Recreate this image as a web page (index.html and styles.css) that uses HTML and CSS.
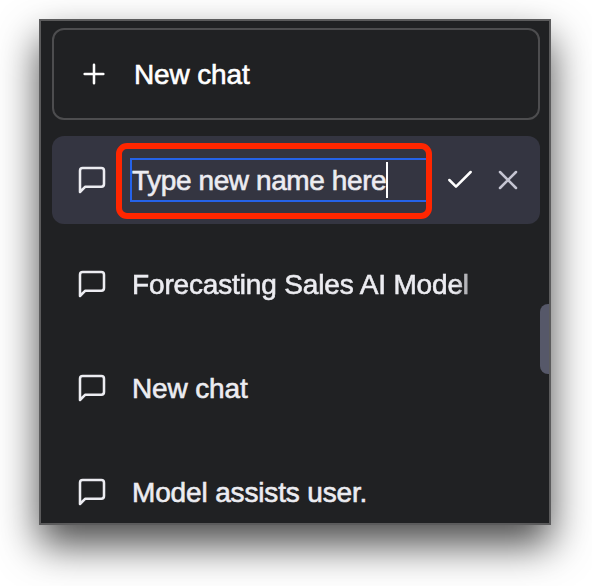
FILE: index.html
```
<!DOCTYPE html>
<html lang="en">
<head>
    <meta charset="UTF-8">
    <meta name="viewport" content="width=device-width, initial-scale=1.0">
    <title>Chat history</title>
    <link rel="stylesheet" href="styles.css">
</head>
<body>
    <svg class="sprite">
        <symbol id="chat" viewBox="0 0 24 24"><path d="M21 15a2 2 0 0 1-2 2H7l-4 4V5a2 2 0 0 1 2-2h14a2 2 0 0 1 2 2z"/></symbol>
    </svg>

    <div class="panel">
        <a href="#" class="new_chat">
            <svg class="icon" viewBox="0 0 24 24"><path d="M12 5v14M5 12h14"/></svg>
            <span class="txt">New chat</span>
        </a>

        <ul class="chat_lst">
            <li class="is_on">
                <svg class="icon"><use href="#chat"/></svg>
                <div class="name_box">
                    <span class="txt">Type new name here</span><span class="caret"></span>
                </div>
                <div class="btns">
                    <svg class="icon ok" viewBox="0 0 24 24"><path d="M20 6L9 17l-5-5"/></svg>
                    <svg class="icon cancel" viewBox="0 0 24 24"><path d="M18 6L6 18M6 6l12 12"/></svg>
                </div>
                <div class="mark"></div>
            </li>
            <li>
                <svg class="icon"><use href="#chat"/></svg>
                <span class="txt fade">Forecasting Sales AI Model</span>
            </li>
            <li>
                <svg class="icon"><use href="#chat"/></svg>
                <span class="txt">New chat</span>
            </li>
            <li>
                <svg class="icon"><use href="#chat"/></svg>
                <span class="txt">Model assists user.</span>
            </li>
        </ul>

        <div class="scroll"></div>
    </div>
</body>
</html>
```

FILE: styles.css
```
/* reset */
*{box-sizing: border-box;}
body,ul{margin: 0; padding: 0;}
ul{list-style: none;}
a{text-decoration: none;}

body{
    min-height: 586px; padding: 19px 0 0 39px;
    background-color: #fff;
    font: 28px/40px "Liberation Sans", Arial, sans-serif;
}
.sprite{display: none;}

/* panel */
.panel{
    position: relative; overflow: hidden;
    width: 512px; height: 506px;
    padding: 7px 9px 0 11px;
    border: 2px solid #5b5b5c;
    background-color: #202123;
    box-shadow: 0 20px 38px rgba(0,0,0,.7);
}

.icon{
    flex: none; width: 32px; height: 32px;
    fill: none; stroke: #ececf1; stroke-width: 1.9;
    stroke-linecap: round; stroke-linejoin: round;
}
.txt{
    padding-top: 2px;
    white-space: nowrap; color: #ececf1;
    letter-spacing: -.15px;
    -webkit-text-stroke: .6px currentColor;
}

.new_chat{
    display: flex; align-items: center; gap: 24px;
    height: 92px; padding: 0 24px;
    border: 2px solid #4d4d4f; border-radius: 12px;
}
.new_chat .txt{color: #fff;}
.new_chat .icon{stroke: #fff;}

/* chat list */
.chat_lst li{
    position: relative;
    display: flex; align-items: center; gap: 24px;
    height: 88px; margin-top: 16px; padding: 0 16px 0 24px;
    border-radius: 12px;
}
.chat_lst li.is_on{gap: 22px; background-color: #343541;}
.chat_lst .fade{
    -webkit-mask-image: linear-gradient(to right, #000 324px, transparent 360px);
    mask-image: linear-gradient(to right, #000 324px, transparent 360px);
}

.name_box{
    display: flex; align-items: center;
    width: 300px; height: 44px;
    border: 2px solid #2563eb;
}
.name_box .txt{letter-spacing: -.4px;}
.caret{width: 2px; height: 36px; background-color: #fff;}

.btns{display: flex; gap: 16px; margin-left: -8px;}
.btns .ok{stroke: #fff;}
.btns .cancel{stroke: #c5c5d2;}

/* red highlight over the name field */
.mark{
    position: absolute; left: 64px; top: 7px;
    width: 316px; height: 76px;
    border: 6px solid #ff2600; border-radius: 11px;
}

.scroll{
    position: absolute; right: 0; top: 283px;
    width: 9px; height: 70px;
    border-radius: 8px 0 0 8px;
    background-color: #565869;
}
```
